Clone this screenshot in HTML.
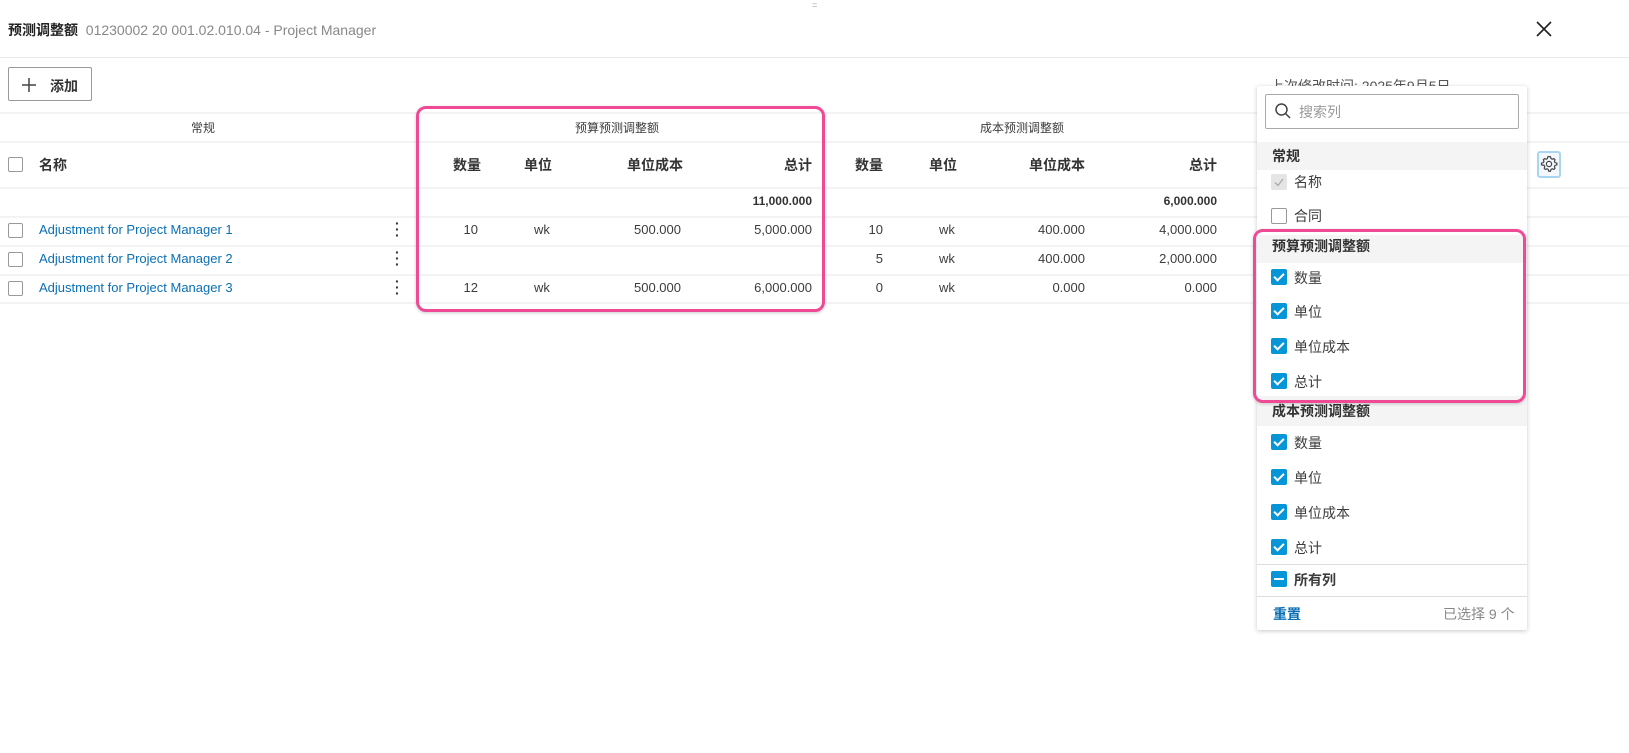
<!DOCTYPE html>
<html><head><meta charset="utf-8"><style>
*{margin:0;padding:0;box-sizing:border-box}
body{width:1629px;height:753px;background:#fff;position:relative;overflow:hidden;font-family:"Liberation Sans","Noto Sans CJK SC",sans-serif;color:#3c3c3c;font-size:13px}
.a{position:absolute;white-space:nowrap}
.hl{position:absolute;left:0;width:1629px;height:2px;background:#f3f3f3}
.r{text-align:right}
.c{text-align:center}
.b{font-weight:bold;color:#333}
.cb{position:absolute;width:15px;height:15px;border:1px solid #999;border-radius:2px;background:#fff}
.ck{position:absolute;width:16px;height:16px;background:#0696d7;border-radius:2px}
.ck::after{content:"";position:absolute;left:5px;top:2px;width:4px;height:8px;border:solid #fff;border-width:0 2px 2px 0;transform:rotate(45deg)}
.lk{color:#0a6fb5}
.pi{font-size:14px;color:#3c3c3c}
.sec{position:absolute;left:0;width:270px;background:#f4f4f4;font-weight:bold;font-size:14px;padding-left:15px;color:#333}
</style></head><body>
<div class="a" style="left:812px;top:0;color:#aaa;font-size:9px">=</div>
<div class="a" style="left:8px;top:20px;font-size:14px"><b style="color:#222">预测调整额</b> <span style="color:#888;font-size:14px">&nbsp;01230002 20 001.02.010.04 - Project Manager</span></div>
<svg class="a" style="left:1536px;top:21px" width="16" height="16"><path d="M1 1L15 15M15 1L1 15" stroke="#222" stroke-width="1.6"/></svg>
<div class="hl" style="top:57px;height:1px;background:#e8e8e8"></div>
<div class="a" style="left:8px;top:67px;width:84px;height:34px;border:1px solid #999;border-radius:2px"></div>
<svg class="a" style="left:21px;top:77px" width="16" height="16"><path d="M8 1V15M1 8H15" stroke="#444" stroke-width="1.5"/></svg>
<div class="a b" style="left:50px;top:76px;font-size:14px">添加</div>
<div class="a" style="left:1270px;top:76px;font-size:14px;color:#555">上次修改时间: 2025年9月5日</div>

<div class="hl" style="top:112px"></div>
<div class="hl" style="top:141px"></div>
<div class="hl" style="top:187px"></div>
<div class="hl" style="top:216px"></div>
<div class="hl" style="top:245px"></div>
<div class="hl" style="top:274px"></div>
<div class="hl" style="top:302px"></div>

<div class="a c" style="left:153px;width:100px;top:119px;font-size:12px">常规</div>
<div class="a c" style="left:567px;width:100px;top:119px;font-size:12px">预算预测调整额</div>
<div class="a c" style="left:972px;width:100px;top:119px;font-size:12px">成本预测调整额</div>

<div class="cb" style="left:8px;top:157px"></div>
<div class="a b" style="left:39px;top:155px;font-size:14px">名称</div>
<div class="a b r" style="left:381px;width:100px;top:155px;font-size:14px">数量</div>
<div class="a b c" style="left:488px;width:100px;top:155px;font-size:14px">单位</div>
<div class="a b r" style="left:583px;width:100px;top:155px;font-size:14px">单位成本</div>
<div class="a b r" style="left:712px;width:100px;top:155px;font-size:14px">总计</div>
<div class="a b r" style="left:783px;width:100px;top:155px;font-size:14px">数量</div>
<div class="a b c" style="left:893px;width:100px;top:155px;font-size:14px">单位</div>
<div class="a b r" style="left:985px;width:100px;top:155px;font-size:14px">单位成本</div>
<div class="a b r" style="left:1117px;width:100px;top:155px;font-size:14px">总计</div>

<div class="a b r" style="left:712px;width:100px;top:194px;font-size:12px">11,000.000</div>
<div class="a b r" style="left:1117px;width:100px;top:194px;font-size:12px">6,000.000</div>

<div class="cb" style="left:8px;top:223px"></div>
<div class="a lk" style="left:39px;top:222px">Adjustment for Project Manager 1</div>
<div class="a b" style="left:395px;top:220px;font-size:14px;line-height:6px;width:4px">·<br>·<br>·</div>
<div class="a r" style="left:378px;width:100px;top:222px">10</div>
<div class="a c" style="left:492px;width:100px;top:222px">wk</div>
<div class="a r" style="left:581px;width:100px;top:222px">500.000</div>
<div class="a r" style="left:712px;width:100px;top:222px">5,000.000</div>
<div class="a r" style="left:783px;width:100px;top:222px">10</div>
<div class="a c" style="left:897px;width:100px;top:222px">wk</div>
<div class="a r" style="left:985px;width:100px;top:222px">400.000</div>
<div class="a r" style="left:1117px;width:100px;top:222px">4,000.000</div>

<div class="cb" style="left:8px;top:252px"></div>
<div class="a lk" style="left:39px;top:251px">Adjustment for Project Manager 2</div>
<div class="a b" style="left:395px;top:249px;font-size:14px;line-height:6px;width:4px">·<br>·<br>·</div>
<div class="a r" style="left:783px;width:100px;top:251px">5</div>
<div class="a c" style="left:897px;width:100px;top:251px">wk</div>
<div class="a r" style="left:985px;width:100px;top:251px">400.000</div>
<div class="a r" style="left:1117px;width:100px;top:251px">2,000.000</div>

<div class="cb" style="left:8px;top:281px"></div>
<div class="a lk" style="left:39px;top:280px">Adjustment for Project Manager 3</div>
<div class="a b" style="left:395px;top:278px;font-size:14px;line-height:6px;width:4px">·<br>·<br>·</div>
<div class="a r" style="left:378px;width:100px;top:280px">12</div>
<div class="a c" style="left:492px;width:100px;top:280px">wk</div>
<div class="a r" style="left:581px;width:100px;top:280px">500.000</div>
<div class="a r" style="left:712px;width:100px;top:280px">6,000.000</div>
<div class="a r" style="left:783px;width:100px;top:280px">0</div>
<div class="a c" style="left:897px;width:100px;top:280px">wk</div>
<div class="a r" style="left:985px;width:100px;top:280px">0.000</div>
<div class="a r" style="left:1117px;width:100px;top:280px">0.000</div>

<div class="a" style="left:416px;top:106px;width:409px;height:206px;border:3px solid #ee4a96;border-radius:10px;box-shadow:0 1px 3px rgba(0,0,0,.2)"></div>

<div class="a" style="left:1537px;top:151px;width:24px;height:27px;border:2px solid #a8d6f0;border-radius:3px;background:#f2f8fc"></div>
<svg class="a" style="left:1540px;top:155px" width="18" height="18" viewBox="0 0 24 24"><path d="M12 2l2 .3.6 2.4 1.6.9 2.3-.8 1.5 1.5-.8 2.3.9 1.6 2.4.6v2.4l-2.4.6-.9 1.6.8 2.3-1.5 1.5-2.3-.8-1.6.9-.6 2.4h-2.4l-.6-2.4-1.6-.9-2.3.8-1.5-1.5.8-2.3-.9-1.6L2 13.2v-2.4l2.4-.6.9-1.6-.8-2.3 1.5-1.5 2.3.8 1.6-.9.6-2.4z" fill="none" stroke="#444" stroke-width="1.6"/><circle cx="12" cy="12" r="3.5" fill="none" stroke="#444" stroke-width="1.6"/></svg>

<div class="a" style="left:1257px;top:86px;width:270px;height:544px;background:#fff;box-shadow:0 1px 5px rgba(0,0,0,.22);border-radius:2px">
 <div class="a" style="left:8px;top:8px;width:254px;height:35px;border:1px solid #aaa;border-radius:2px"></div>
 <svg class="a" style="left:17px;top:16px" width="18" height="18"><circle cx="7.5" cy="7.5" r="5.5" fill="none" stroke="#444" stroke-width="1.5"/><path d="M11.5 11.5L16 16" stroke="#444" stroke-width="1.5"/></svg>
 <div class="a" style="left:42px;top:16px;font-size:14px;color:#999">搜索列</div>
 <div class="sec" style="top:56px;height:28px;line-height:28px">常规</div>
 <div class="a" style="left:14px;top:88px;width:16px;height:16px;background:#e5e5e5;border-radius:2px"></div>
 <svg class="a" style="left:14px;top:88px" width="16" height="16"><path d="M4 8.5l3 3 5-6.5" fill="none" stroke="#aaa" stroke-width="1.3"/></svg>
 <div class="a pi" style="left:37px;top:86px">名称</div>
 <div class="cb" style="left:14px;top:122px;width:16px;height:16px"></div>
 <div class="a pi" style="left:37px;top:120px">合同</div>
 <div class="sec" style="top:149px;height:28px;line-height:22px">预算预测调整额</div>
 <div class="ck" style="left:14px;top:183px"></div><div class="a pi" style="left:37px;top:182px">数量</div>
 <div class="ck" style="left:14px;top:217px"></div><div class="a pi" style="left:37px;top:216px">单位</div>
 <div class="ck" style="left:14px;top:252px"></div><div class="a pi" style="left:37px;top:251px">单位成本</div>
 <div class="ck" style="left:14px;top:287px"></div><div class="a pi" style="left:37px;top:286px">总计</div>
 <div class="sec" style="top:310px;height:30px;line-height:30px">成本预测调整额</div>
 <div class="ck" style="left:14px;top:348px"></div><div class="a pi" style="left:37px;top:347px">数量</div>
 <div class="ck" style="left:14px;top:383px"></div><div class="a pi" style="left:37px;top:382px">单位</div>
 <div class="ck" style="left:14px;top:418px"></div><div class="a pi" style="left:37px;top:417px">单位成本</div>
 <div class="ck" style="left:14px;top:453px"></div><div class="a pi" style="left:37px;top:452px">总计</div>
 <div class="a" style="left:0;top:478px;width:270px;height:1px;background:#ddd"></div>
 <div class="a" style="left:14px;top:485px;width:16px;height:16px;background:#0696d7;border-radius:2px"></div>
 <div class="a" style="left:17px;top:492px;width:10px;height:2px;background:#fff"></div>
 <div class="a pi b" style="left:37px;top:484px">所有列</div>
 <div class="a" style="left:0;top:510px;width:270px;height:1px;background:#ddd"></div>
 <div class="a b" style="left:16px;top:518px;font-size:14px;color:#0a6fb5">重置</div>
 <div class="a" style="left:186px;top:518px;font-size:14px;color:#888">已选择 9 个</div>
</div>
<div class="a" style="left:1253px;top:229px;width:273px;height:174px;border:3px solid #ee4a96;border-radius:10px;box-shadow:0 1px 3px rgba(0,0,0,.2)"></div>
</body></html>
